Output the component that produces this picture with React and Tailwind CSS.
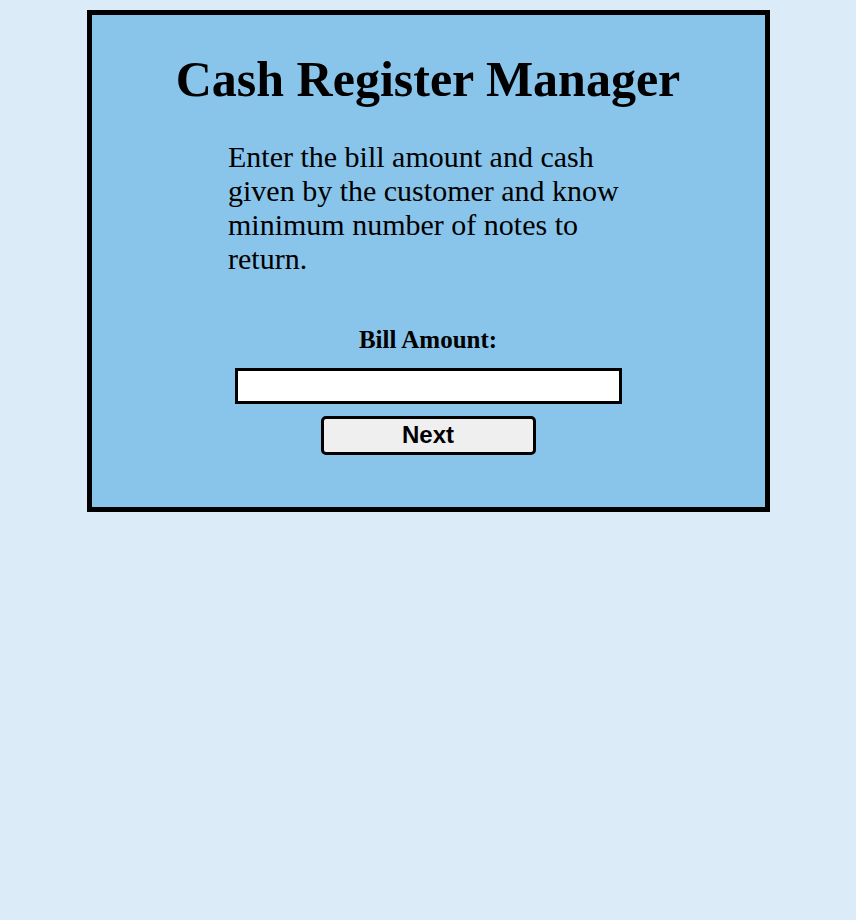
export default function App() {
  return (
    <div className="min-h-[920px] bg-[#dbebf8] pt-[10px]" style={{ fontFamily: '"Liberation Serif", serif' }}>
      <div className="mx-auto w-[683px] h-[502px] border-[5px] border-black bg-[#89c5eb] flex flex-col items-center">
        <h1 className="mt-[37px] text-[50px] leading-[55px] font-bold text-black">Cash Register Manager</h1>
        <p className="mt-[33px] w-[400px] text-[30px] leading-[34px] text-black">
          Enter the bill amount and cash given by the customer and know minimum number of notes to return.
        </p>
        <label htmlFor="bill" className="mt-[50px] text-[25px] leading-[28px] font-bold text-black">
          Bill Amount:
        </label>
        <input
          id="bill"
          type="number"
          className="mt-[14px] w-[387px] h-[36px] border-[3px] border-black bg-white outline-none px-1 text-[20px]"
        />
        <button
          type="button"
          className="mt-[12px] w-[215px] h-[39px] pb-[2px] border-[3px] border-black rounded-[5px] bg-[#efefef] text-[24px] leading-none font-bold text-black"
          style={{ fontFamily: '"Liberation Sans", Arial, sans-serif' }}
        >
          Next
        </button>
      </div>
    </div>
  );
}
